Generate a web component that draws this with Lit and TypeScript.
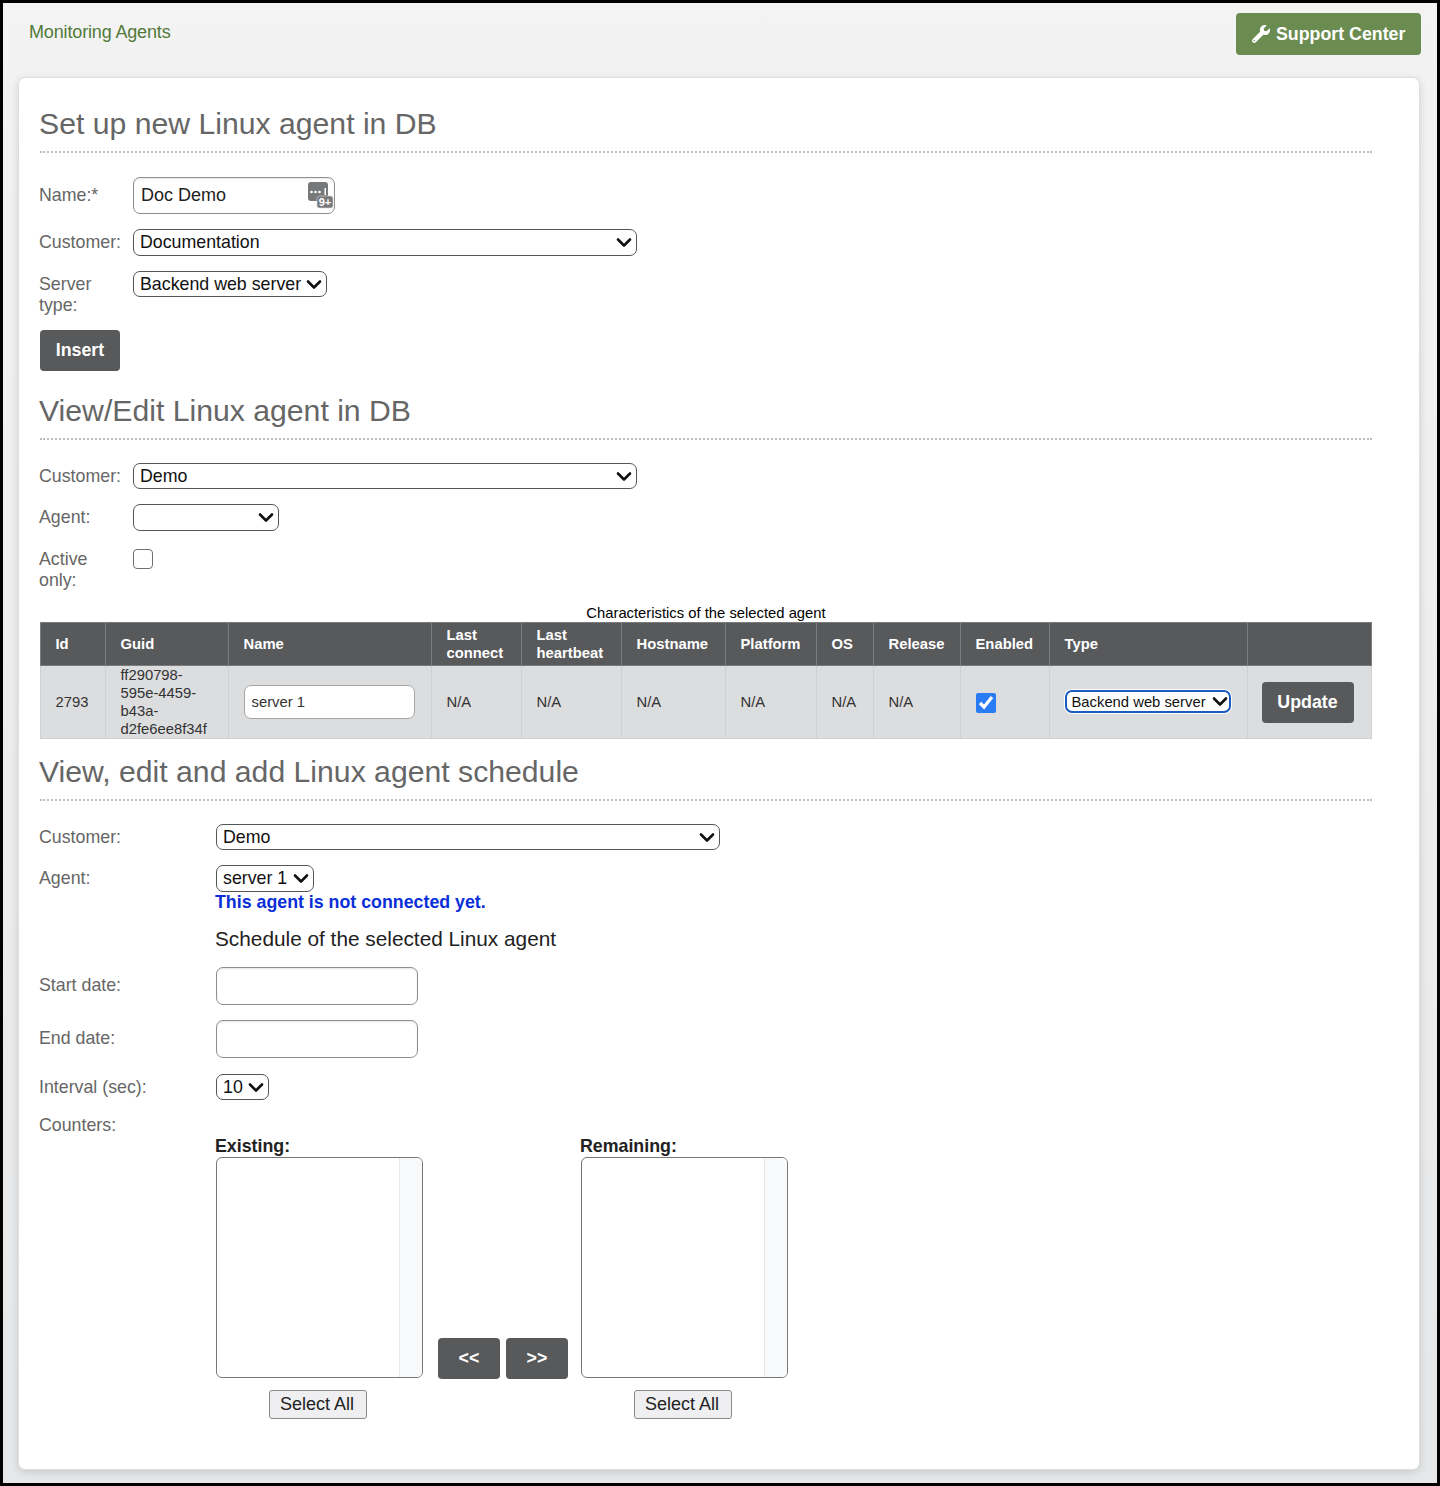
import { LitElement, html, css, svg } from 'lit';
import { customElement } from 'lit/decorators.js';

const chevron = svg`<path d="M2 3.5 L8 9.5 L14 3.5" fill="none" stroke="currentColor" stroke-width="2.6" stroke-linecap="round" stroke-linejoin="round"/>`;

const COLUMNS = [
  { title: 'Id', width: 65 },
  { title: 'Guid', width: 123 },
  { title: 'Name', width: 203 },
  { title: 'Last connect', width: 90 },
  { title: 'Last heartbeat', width: 100 },
  { title: 'Hostname', width: 104 },
  { title: 'Platform', width: 91 },
  { title: 'OS', width: 57 },
  { title: 'Release', width: 87 },
  { title: 'Enabled', width: 89 },
  { title: 'Type', width: 198 },
  { title: '', width: 124 },
];

@customElement('app-root')
export class AppRoot extends LitElement {
  static styles = css`
    :host {
      display: flex;
      flex-direction: column;
      box-sizing: border-box;
      height: 1486px;
      border: 3px solid #000;
      background: linear-gradient(#f3f3f4, #e6e7e8);
      font-family: 'Liberation Sans', Arial, sans-serif;
      font-size: 17.8px;
      color: #666;
    }
    * { box-sizing: border-box; }

    /* top bar */
    .top {
      display: flex;
      justify-content: space-between;
      height: 75px;
      padding: 10px 16px 0 26px;
    }
    .crumb {
      font-size: 18px;
      line-height: 38px;
      color: #527a38;
      letter-spacing: -0.15px;
    }
    .support {
      display: flex;
      align-items: center;
      gap: 6px;
      height: 42px;
      width: 185px;
      padding-left: 16px;
      border: 0;
      border-radius: 4px;
      background: #6b8c50;
      color: #fff;
      font: bold 17.8px 'Liberation Sans', Arial, sans-serif;
    }
    .support svg { width: 18px; height: 18px; fill: #fff; }

    /* card */
    .card {
      flex: 1;
      margin: 0 18px 14px 16px;
      padding: 29px 47px 0 21px;
      background: #fff;
      border-radius: 6px;
      box-shadow: 0 0 0 1px #dedfe0, 0 2px 10px rgba(0, 0, 0, 0.16);
    }
    h2 {
      margin: 0 0 23px;
      height: 46px;
      border-bottom: 2px dotted #bdbdbd;
      font-size: 30.2px;
      font-weight: 400;
      line-height: 34px;
      color: #666;
    }
    h2.late { height: 47px; padding-top: 1px; }
    h2 span { margin-left: -1px; }

    .row {
      display: grid;
      grid-template-columns: 93px 1fr;
      align-items: start;
      margin-bottom: 15px;
      line-height: 21px;
    }
    .row.wide { grid-template-columns: 176px 1fr; }
    .row.center { align-items: center; }
    .row.first { margin-top: 24px; }
    .row.tight { margin-bottom: 0; }
    .row.loose { margin-bottom: 16px; }
    .label { padding: 3px 6px 0 0; margin-left: -1px; }
    .center > .label { padding-top: 0; }

    .field {
      display: block;
      height: 38px;
      width: 202px;
      padding: 0 7px;
      border: 1px solid #8f8f8f;
      border-radius: 7px;
      background: #fff;
      color: #222;
      font: 18px 'Liberation Sans', Arial, sans-serif;
      box-shadow: inset 0 1px 2px rgba(0, 0, 0, 0.1);
    }
    .name-wrap { position: relative; width: 202px; height: 37px; }
    .name-wrap .field { height: 37px; }
    .name-wrap svg { position: absolute; top: 4px; right: 1px; width: 26px; height: 28px; }

    .sel { position: relative; display: inline-block; vertical-align: top; }
    .sel select {
      appearance: none;
      display: block;
      width: 100%;
      height: 26.5px;
      padding: 0 0 0 6px;
      border: 1px solid #555;
      border-radius: 7px;
      background: #fff;
      color: #111;
      font: 17.8px 'Liberation Sans', Arial, sans-serif;
    }
    .sel svg {
      position: absolute;
      right: 5px;
      top: 7px;
      width: 16px;
      height: 13px;
      color: #111;
      pointer-events: none;
    }
    .w504 { width: 504px; }
    .w194 { width: 194px; }
    .w146 { width: 146px; }
    .w98 { width: 98px; }
    .w53 { width: 53px; }

    .btn {
      border: 0;
      border-radius: 4px;
      background: #58595b;
      color: #fff;
      font: bold 17.8px 'Liberation Sans', Arial, sans-serif;
      height: 41px;
    }
    .insert { display: block; width: 80px; margin: -1px 0 23px; }

    .check {
      appearance: none;
      display: block;
      width: 20px;
      height: 20px;
      margin: 3px 0 0;
      border: 1px solid #6f6f6f;
      border-radius: 4px;
      background: #fff;
    }

    /* table */
    .caption { height: 18px; margin-top: 13px; font-size: 14.8px; line-height: 18px; color: #000; text-align: center; }
    table {
      table-layout: fixed;
      border-collapse: collapse;
      width: 1331px;
      margin-bottom: 15px;
      font-size: 14.8px;
      line-height: 18px;
      color: #333;
    }
    th {
      height: 43px;
      padding: 0 0 0 14.5px;
      background: #58595b;
      border: 1px solid #7b7c7e;
      color: #fff;
      font-size: 14.8px;
      text-align: left;
    }
    td {
      height: 72px;
      padding: 0 0 0 14.5px;
      background: #dcddde;
      border: 1px solid #cfd0d2;
    }
    td.guid { padding-right: 14px; }
    .cell-input {
      display: block;
      width: 171px;
      height: 34px;
      padding: 0 7px;
      border: 1px solid #a5a5a5;
      border-radius: 7px;
      background: #fff;
      color: #333;
      font: 14.8px 'Liberation Sans', Arial, sans-serif;
    }
    .enabled {
      display: block;
      width: 20px;
      height: 20px;
      margin: 2px 0 0;
      accent-color: #2a7cf5;
    }
    .type.sel { width: 166px; }
    .type.sel select {
      height: 23px;
      font-size: 14.8px;
      padding-left: 5px;
      border: 2px solid #1a5cc0;
      box-shadow: 0 0 0 1px #fff;
    }
    .type.sel svg { top: 5px; right: 3px; }
    .update { display: block; width: 92px; margin: 2px 0 0 -1px; }

    /* schedule */
    .notice { font-size: 17.8px; font-weight: 700; color: #0a2fd8; line-height: 21px; margin-left: -1px; }
    .sched-title { font-size: 20.8px; line-height: 26px; color: #222; margin: 13px 0 0 -1px; }
    .picker { display: flex; align-items: flex-start; padding-top: 42px; }
    .col { position: relative; width: 207px; }
    .col b {
      position: absolute;
      top: -21px;
      left: -1px;
      color: #222;
      white-space: nowrap;
    }
    .list {
      display: flex;
      justify-content: flex-end;
      height: 221px;
      border: 1px solid #777;
      border-radius: 6px;
      background: #fff;
      overflow: hidden;
    }
    .list i { width: 23px; background: #f8f9fa; border-left: 1px solid #e8e9ea; }
    .all {
      display: block;
      width: 98px;
      height: 29px;
      margin: 12px 0 0 53px;
      padding: 0 2px 0 0;
      border: 1px solid #8a8a8a;
      border-radius: 3px;
      background: #efeff1;
      color: #222;
      font: 18px 'Liberation Sans', Arial, sans-serif;
    }
    .moves { display: flex; gap: 6px; margin: 181px 13px 0 15px; }
    .moves .btn { width: 62px; }
  `;

  private _select(cls: string, value: string) {
    return html`<span class="sel ${cls}">
      <select><option>${value}</option></select>
      <svg viewBox="0 0 16 13">${chevron}</svg>
    </span>`;
  }

  private _list(title: string) {
    return html`<div class="col">
      <b>${title}</b>
      <div class="list"><i></i></div>
      <button class="all">Select All</button>
    </div>`;
  }

  render() {
    return html`
      <div class="top">
        <div class="crumb">Monitoring Agents</div>
        <button class="support">
          <svg viewBox="0 0 512 512"><path d="M507.73 109.1c-2.24-9.03-13.54-12.09-20.12-5.51l-74.36 74.36-67.88-11.31-11.31-67.88 74.36-74.36c6.62-6.62 3.43-17.9-5.66-20.16-47.38-11.74-99.55.91-136.58 37.93-39.64 39.64-50.55 97.1-34.05 147.2L18.74 402.76c-24.99 24.99-24.99 65.51 0 90.5 24.99 24.99 65.51 24.99 90.5 0l213.21-213.21c50.12 16.71 107.47 5.68 147.37-34.22 37.07-37.07 49.7-89.32 37.91-136.73zM64 472c-13.25 0-24-10.75-24-24 0-13.26 10.75-24 24-24s24 10.74 24 24c0 13.25-10.75 24-24 24z"/></svg>
          Support Center
        </button>
      </div>

      <div class="card">
        <h2 style="margin-bottom:0"><span>Set up new Linux agent in DB</span></h2>
        <div class="row center first">
          <div class="label">Name:*</div>
          <div class="name-wrap">
            <input class="field" .value=${'Doc Demo'} />
            <svg viewBox="0 0 26 28">
              <rect x="0" y="1" width="20" height="19" rx="3" fill="#77787a"/>
              <circle cx="3.5" cy="11" r="1.3" fill="#fff"/>
              <circle cx="7.5" cy="11" r="1.3" fill="#fff"/>
              <circle cx="11.5" cy="11" r="1.3" fill="#fff"/>
              <rect x="16.5" y="7" width="1.5" height="7" fill="#fff"/>
              <rect x="9" y="15" width="16" height="12" rx="2.5" fill="#77787a" stroke="#d8d8d8" stroke-width="0.6"/>
              <text x="17" y="25" font-size="11" font-weight="700" fill="#fff" text-anchor="middle" font-family="Liberation Sans">9+</text>
            </svg>
          </div>
        </div>
        <div class="row">
          <div class="label">Customer:</div>
          <div>${this._select('w504', 'Documentation')}</div>
        </div>
        <div class="row">
          <div class="label">Server type:</div>
          <div>${this._select('w194', 'Backend web server')}</div>
        </div>
        <button class="btn insert">Insert</button>

        <h2><span>View/Edit Linux agent in DB</span></h2>
        <div class="row">
          <div class="label">Customer:</div>
          <div>${this._select('w504', 'Demo')}</div>
        </div>
        <div class="row">
          <div class="label">Agent:</div>
          <div>${this._select('w146', '')}</div>
        </div>
        <div class="row tight">
          <div class="label">Active only:</div>
          <div><input type="checkbox" class="check" /></div>
        </div>

        <div class="caption">Characteristics of the selected agent</div>
        <table>
          <colgroup>${COLUMNS.map((c) => html`<col style="width:${c.width}px" />`)}</colgroup>
          <thead>
            <tr>${COLUMNS.map((c) => html`<th>${c.title}</th>`)}</tr>
          </thead>
          <tbody>
            <tr>
              <td>2793</td>
              <td class="guid">ff290798-595e-4459-b43a-d2fe6ee8f34f</td>
              <td><input class="cell-input" .value=${'server 1'} /></td>
              <td>N/A</td>
              <td>N/A</td>
              <td>N/A</td>
              <td>N/A</td>
              <td>N/A</td>
              <td>N/A</td>
              <td><input type="checkbox" class="enabled" checked /></td>
              <td>${this._select('type', 'Backend web server')}</td>
              <td><button class="btn update">Update</button></td>
            </tr>
          </tbody>
        </table>

        <h2 class="late"><span>View, edit and add Linux agent schedule</span></h2>
        <div class="row wide">
          <div class="label">Customer:</div>
          <div>${this._select('w504', 'Demo')}</div>
        </div>
        <div class="row wide">
          <div class="label">Agent:</div>
          <div>
            ${this._select('w98', 'server 1')}
            <div class="notice">This agent is not connected yet.</div>
            <div class="sched-title">Schedule of the selected Linux agent</div>
          </div>
        </div>
        <div class="row wide center">
          <div class="label">Start date:</div>
          <input class="field" />
        </div>
        <div class="row wide center loose">
          <div class="label">End date:</div>
          <input class="field" />
        </div>
        <div class="row wide">
          <div class="label">Interval (sec):</div>
          <div>${this._select('w53', '10')}</div>
        </div>
        <div class="row wide">
          <div class="label" style="padding-top:0">Counters:</div>
          <div class="picker">
            ${this._list('Existing:')}
            <div class="moves">
              <button class="btn">&lt;&lt;</button>
              <button class="btn">&gt;&gt;</button>
            </div>
            ${this._list('Remaining:')}
          </div>
        </div>
      </div>
    `;
  }
}
